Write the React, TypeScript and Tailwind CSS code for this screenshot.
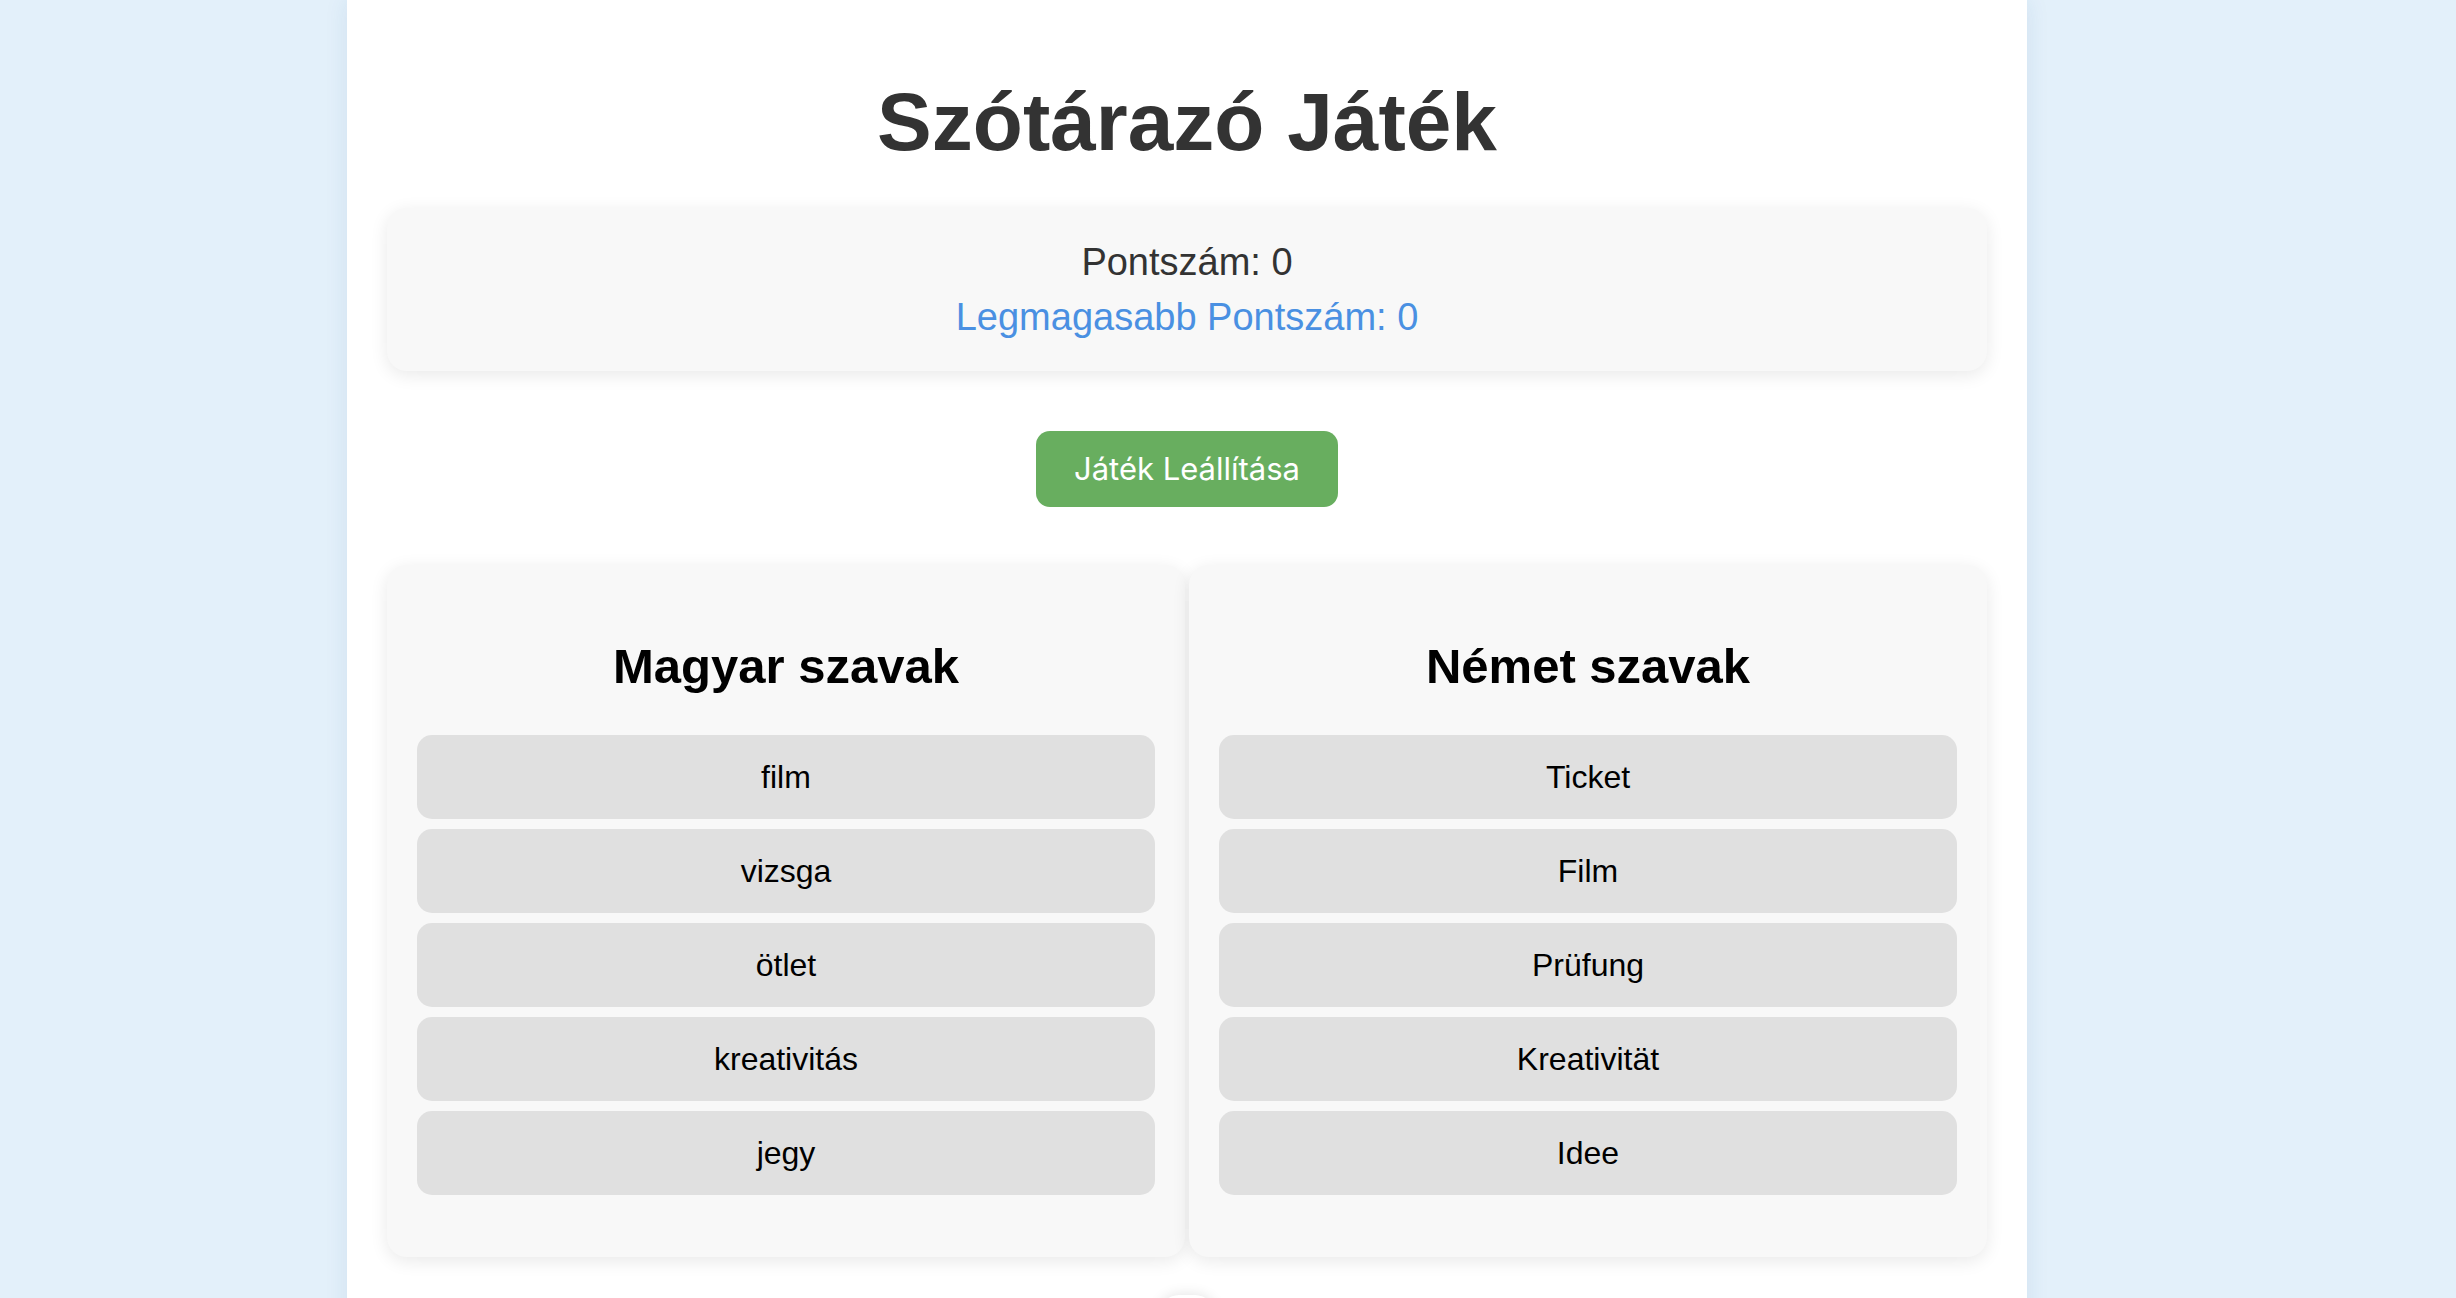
import React from "react";

const magyar = ["film", "vizsga", "ötlet", "kreativitás", "jegy"];
const nemet = ["Ticket", "Film", "Prüfung", "Kreativität", "Idee"];

function WordColumn({ title, words }: { title: string; words: string[] }) {
  return (
    <div className="bg-[#f8f8f8] rounded-[20px] shadow-[0_4px_18px_rgba(0,0,0,0.09)] px-[30px] pt-[73px] pb-[62px]">
      <h2 className="text-[49px] font-bold text-black text-center leading-[1.15] mb-[41px]">{title}</h2>
      <div className="flex flex-col gap-[10px]">
        {words.map((w) => (
          <div
            key={w}
            className="h-[84px] bg-[#e0e0e0] rounded-[15px] flex items-center justify-center text-[32px] text-black"
          >
            {w}
          </div>
        ))}
      </div>
    </div>
  );
}

export default function App() {
  return (
    <div className="min-h-screen bg-[#e3f0fa] pl-[347px] font-['Liberation_Sans',Arial,sans-serif]">
      <div className="w-[1680px] min-h-screen bg-white px-[40px] pt-[81px] shadow-[0_0_22px_rgba(30,90,150,0.10)] overflow-hidden">
        <h1 className="text-[82px] font-bold text-[#333] text-center leading-none">Szótárazó Játék</h1>

        <div className="mt-[45px] bg-[#f8f8f8] rounded-[20px] shadow-[0_4px_18px_rgba(0,0,0,0.09)] pt-[27px] pb-[26px] text-center text-[38px] leading-[55px]">
          <div className="text-[#333]">Pontszám: 0</div>
          <div className="text-[#4a90e2]">Legmagasabb Pontszám: 0</div>
        </div>

        <div className="mt-[60px] flex justify-center">
          <button
            type="button"
            className="h-[76px] px-[38px] bg-[#68ae5f] text-white rounded-[14px] text-[31px] font-['Inter',sans-serif]"
          >
            Játék Leállítása
          </button>
        </div>

        <div className="mt-[58px] grid grid-cols-2 gap-[4px]">
          <WordColumn title="Magyar szavak" words={magyar} />
          <WordColumn title="Német szavak" words={nemet} />
        </div>

        <div className="mt-[38px] flex justify-center">
          <div className="w-[56px] h-[40px] rounded-full bg-white shadow-[0_0_14px_rgba(0,0,0,0.12)]" />
        </div>
      </div>
    </div>
  );
}
